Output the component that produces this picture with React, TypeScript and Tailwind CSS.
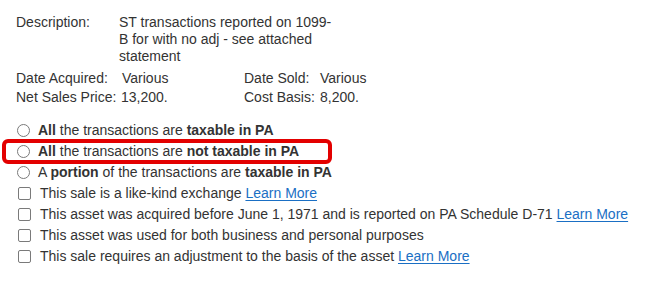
const font = { fontFamily: '"Liberation Sans", Arial, sans-serif' };

function Radio({ children, highlight }: { children: React.ReactNode; highlight?: boolean }) {
  return (
    <div className="relative flex h-[21px] items-center pl-[17px]">
      {highlight && (
        <div className="pointer-events-none absolute left-[2px] top-[-2px] h-[25px] w-[330px] rounded-[6px] border-[4px] border-[#e30000]" />
      )}
      <input
        type="radio"
        name="taxable"
        className="m-0 h-[13px] w-[13px] shrink-0 appearance-none rounded-full border border-[#7a7a7a] bg-white"
      />
      <label className="ml-[8px] whitespace-nowrap">{children}</label>
    </div>
  );
}

function Check({ children }: { children: React.ReactNode }) {
  return (
    <div className="flex h-[21px] items-center pl-[18px]">
      <input
        type="checkbox"
        className="m-0 h-[13px] w-[13px] shrink-0 appearance-none rounded-[2px] border border-[#7a7a7a] bg-white"
      />
      <label className="ml-[9px] whitespace-nowrap">{children}</label>
    </div>
  );
}

function LearnMore() {
  return (
    <a href="#" className="text-[#1a6fc4] underline underline-offset-2">
      Learn More
    </a>
  );
}

export default function App() {
  return (
    <div className="h-[288px] w-[665px] bg-white text-[14px] text-[#333333]" style={font}>
      <div className="pl-[16px] pt-[14px]">
        <div className="flex leading-[17px]">
          <div className="w-[103px] shrink-0">Description:</div>
          <div className="w-[216px]">ST transactions reported on 1099-B for with no adj - see attached statement</div>
        </div>

        <div className="mt-[4px] grid grid-cols-[106px_122px_76px_auto] leading-[19px]">
          <div>Date Acquired:</div>
          <div>Various</div>
          <div>Date Sold:</div>
          <div>Various</div>
          <div>Net Sales Price:</div>
          <div className="-ml-[1px]">13,200.</div>
          <div>Cost Basis:</div>
          <div>8,200.</div>
        </div>
      </div>

      <div className="mt-[13px] flex flex-col">
        <Radio>
          <b>All</b> the transactions are <b>taxable in PA</b>
        </Radio>
        <Radio highlight>
          <b>All</b> the transactions are <b>not taxable in PA</b>
        </Radio>
        <Radio>
          A <b>portion</b> of the transactions are <b>taxable in PA</b>
        </Radio>
        <Check>
          This sale is a like-kind exchange <LearnMore />
        </Check>
        <Check>
          This asset was acquired before June 1, 1971 and is reported on PA Schedule D-71 <LearnMore />
        </Check>
        <Check>This asset was used for both business and personal purposes</Check>
        <Check>
          This sale requires an adjustment to the basis of the asset <LearnMore />
        </Check>
      </div>
    </div>
  );
}
